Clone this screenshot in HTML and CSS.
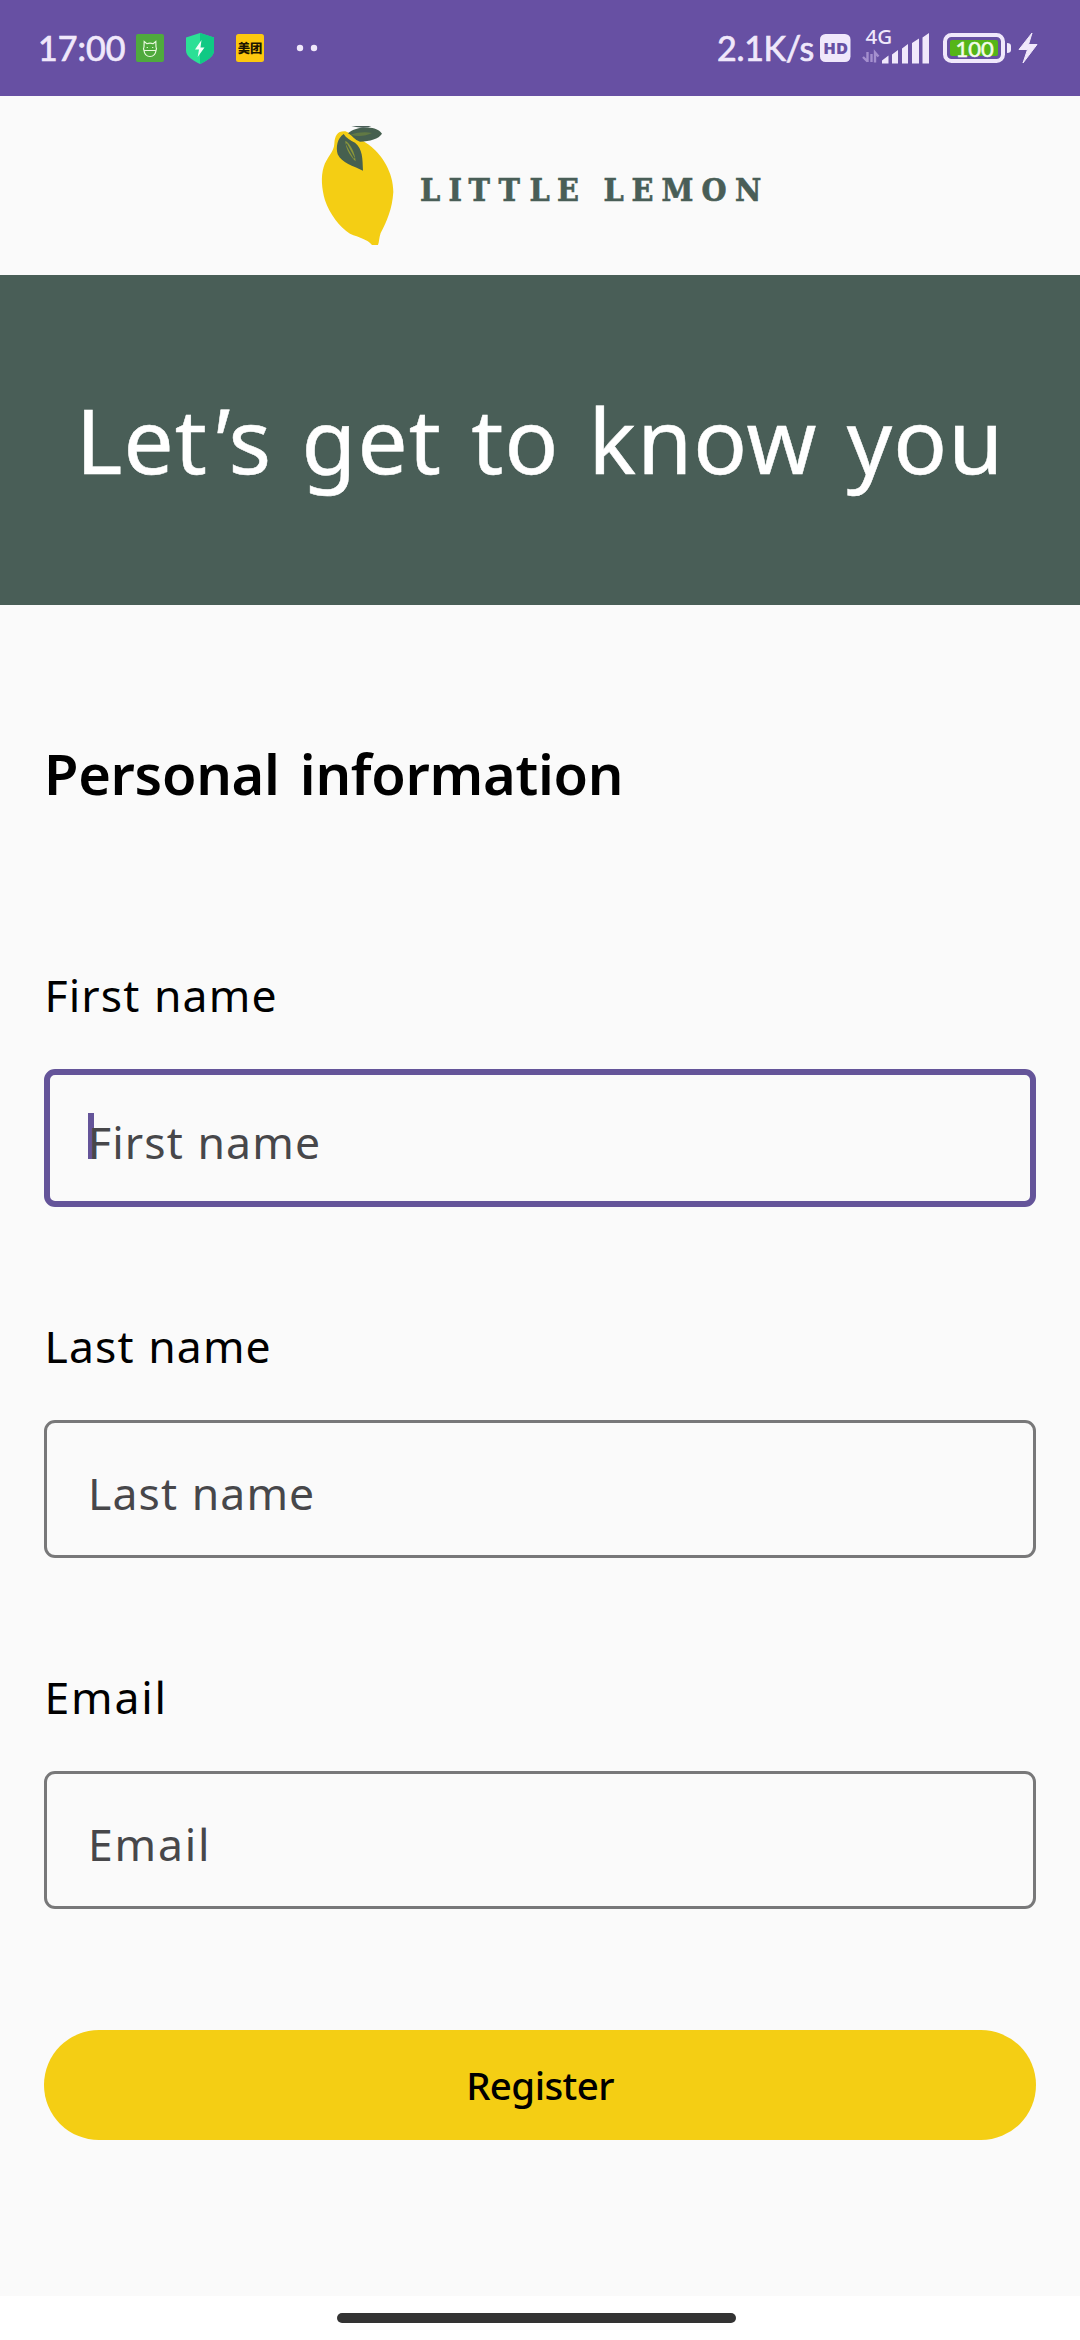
FILE: index.html
```html
<!DOCTYPE html>
<html lang="en">
<head>
<meta charset="utf-8">
<title>Little Lemon</title>
<link rel="stylesheet" href="styles.css">
</head>
<body>
<div class="status">
  <span class="clock">17:00</span>
  <svg class="app-icons" viewBox="0 0 204 36" width="204" height="36">
    <rect x="6" y="4" width="28" height="28" rx="2" fill="#4faa3d"/>
    <path d="M14 17l.2-5.500 2.600 2.200q3.200-1 6.400 0l2.600-2.200.2 5.500q1 1.500 0 3.500c-.5 4-3 6-6 6s-5.500-2-6-6q-1-2 0-3.500zM13.500 20.500h13M17.300 17v1M22.700 17v1" fill="none" stroke="#e9f8df" stroke-width="1.200"/>
    <path d="M70 3l14 4.500v13c0 6-7 10-14 13.500-7-3.500-14-7.500-14-13.500v-13z" fill="#2be096"/>
    <path d="M70 3l14 4.500v13c0 6-7 10-14 13.500z" fill="#10c984"/>
    <path d="M71.500 10l-6.500 9.500h4l-1.300 7.500 6.800-9.500h-4z" fill="#f2fff9"/>
    <rect x="106" y="4" width="28" height="28" rx="2.500" fill="#fdc80e"/>
    <text class="meituan" x="107.700" y="22.800">美团</text>
    <circle cx="170" cy="18" r="3.200" fill="#f0e8fb"/>
    <circle cx="184" cy="18" r="3.200" fill="#f0e8fb"/>
  </svg>
  <span class="speed">2.1K/s</span>
  <svg class="system-icons" viewBox="818 18 224 60" width="224" height="60">
    <rect x="820" y="34" width="30.500" height="28" rx="5.500" fill="#f0e8fb"/>
    <text class="hd" x="823.300" y="54.200">HD</text>
    <text class="net" x="865.500" y="44">4G</text>
    <path d="M867.500 52v10M863 57l4.500 4.500M871.500 54v8M875 62.500v-10l3.500 4" fill="none" stroke="#a48fce" stroke-width="2.400"/>
    <path d="M882 63.500v-3l6.500-5v8zM892 63.500v-9l6-4.500v13.500zM902 63.500v-15l6-4.500v19.500zM912 63.500v-20.500l7-4.500v25zM922.500 63.500v-26l6.500-4.500v30.500z" fill="#f0e8fb"/>
    <rect x="945" y="35" width="58" height="26" rx="6.500" fill="none" stroke="#f0e8fb" stroke-width="4"/>
    <rect x="950" y="40" width="48" height="16" rx="2" fill="#55b518"/>
    <text class="charge" x="955.500" y="56.500">100</text>
    <path d="M1007 43q4 0 4 3v4q0 3-4 3z" fill="#f0e8fb"/>
    <path d="M1032 33l-13 16.500h8.500l-4.500 13.500 14-18.500h-8.500z" fill="#f0e8fb" stroke="#f0e8fb" stroke-linejoin="round"/>
  </svg>
</div>
<header class="brand">
  <svg class="lemon" viewBox="60 77 225 358" width="75" height="119.300">
    <path d="M136 93C114 91 104 105 103 130C102 155 80 170 71 200C62 230 65 265 75 300C88 340 120 382 150 400C178 412 202 416 216 434H234C238 425 237 412 242 398C260 365 277 325 280 275C280 215 245 165 215 140C190 120 165 108 148 98Z" fill="#f4ce14"/>
    <path d="M144 99C158 85 185 80 210 82C230 84 241 91 246 100C236 116 210 123 180 124C163 119 158 106 144 99Z" fill="#46604f"/>
    <path d="M154 77H214Q205 83 186 82T154 77Z" fill="#495e57"/>
    <path d="M152 103C175 95 197 94 216 98C197 107 174 110 152 103Z" fill="#617944"/>
    <path d="M131 101C112 113 107 141 113 162C125 188 160 197 189 211C188 175 188 146 165 127C152 120 138 113 131 101Z" fill="#46604f"/>
    <path d="M136 121C150 130 164 153 167 183C153 170 137 148 136 121Z" fill="#8d983a"/>
    <path d="M139 130Q149 150 163 174" fill="none" stroke="#46604f" stroke-width="4"/>
  </svg>
  <svg class="wordmark" viewBox="0 0 370 60" width="370" height="60">
    <text y="39" x="0 28.500 48.500 78.500 109.500 137 160 183.500 211.500 241.500 281.500 315">LITTLE LEMON</text>
  </svg>
</header>
<section class="hero"><h1 class="hero-title">Let<i>'</i>s get to know you</h1></section>
<main class="form">
  <h2 class="form-title">Personal information</h2>
  <div class="group">
    <label class="label">First name</label>
    <div class="field focused"><i class="caret"></i><span class="placeholder">First name</span></div>
  </div>
  <div class="group">
    <label class="label">Last name</label>
    <div class="field"><span class="placeholder">Last name</span></div>
  </div>
  <div class="group">
    <label class="label email">Email</label>
    <div class="field"><span class="placeholder email">Email</span></div>
  </div>
  <button class="register">Register</button>
</main>
<footer class="nav"><div class="handle"></div></footer>
</body>
</html>
```
FILE: styles.css
```css
* { box-sizing: border-box; }
body {
  margin: 0;
  width: 1080px;
  height: 2340px;
  display: flex;
  flex-direction: column;
  background: #fafafa;
  color: #000;
  font-family: "Noto Sans", "Noto Sans CJK SC", sans-serif;
}
.status {
  height: 96px;
  flex: none;
  display: flex;
  align-items: center;
  padding: 0 38px;
  background: #6750a3;
  color: #f0e8fb;
  line-height: 96px;
}
.clock, .speed { font-family: Lato, sans-serif; font-size: 34px; -webkit-text-stroke: 0.7px #f0e8fb; white-space: nowrap; }
.clock { width: 92px; }
.speed { margin-left: auto; width: 101px; letter-spacing: -0.300px; }
.meituan { font: 900 12.300px "Noto Sans CJK SC", sans-serif; fill: #1c1600; }
.hd { font: 800 16.500px "Open Sans", sans-serif; fill: #6750a3; }
.net { font: 500 20.500px "Noto Sans", sans-serif; fill: #f0e8fb; }
.charge { font: 400 22px Lato, sans-serif; fill: #f4fbea; stroke: #f4fbea; stroke-width: 0.500px; }
.brand {
  height: 179px;
  flex: none;
  display: flex;
  align-items: flex-start;
  gap: 25px;
  padding: 30px 0 0 320px;
}
.wordmark { margin-top: 36px; }
.wordmark text { font: 700 32px "DejaVu Serif Condensed", "DejaVu Serif", serif; fill: #495e57; stroke: #495e57; stroke-width: 0.600px; }
.hero {
  height: 330px;
  flex: none;
  display: flex;
  align-items: center;
  justify-content: center;
  background: #495e57;
}
.hero-title { margin: 0; font-size: 89px; font-weight: 400; letter-spacing: 1.100px; word-spacing: 5px; line-height: 120px; color: #fff; white-space: nowrap; -webkit-text-stroke: 0.500px #fff; }
.form { flex: 1; display: flex; flex-direction: column; padding: 128px 44px 0; }
.form-title { margin: 0 0 152px; font-size: 56px; font-weight: 600; line-height: 80px; letter-spacing: -0.300px; word-spacing: 6px; }
.group { height: 351px; flex: none; }
.label { display: block; height: 104px; line-height: 60px; padding-left: 0.500px; }
.label, .placeholder { font-size: 44.500px; letter-spacing: 1.100px; word-spacing: 1px; }
.email { letter-spacing: 1.800px; }
.field {
  position: relative;
  height: 138px;
  border: 3px solid #787879;
  border-radius: 11px;
  display: flex;
  align-items: center;
  padding: 7px 0 0 41px;
  color: #47474a;
}
.focused { border: 6px solid #645499; padding-left: 38px; }
.caret { position: absolute; left: 38px; top: 38px; width: 6px; height: 46px; background: #645499; }
.placeholder { position: relative; line-height: 60px; }
.register {
  height: 110px;
  margin-top: 12px;
  border: 0;
  border-radius: 55px;
  padding: 0;
  background: #f4ce14;
  color: #000;
  font: 500 38.500px/60px "Noto Sans", sans-serif;
  letter-spacing: -0.600px;
}
.nav { height: 44px; flex: none; display: flex; justify-content: center; padding-top: 17px; background: #fff; }
.handle { width: 399px; height: 10px; border-radius: 5px; background: #333; margin-right: 7px; }
```
